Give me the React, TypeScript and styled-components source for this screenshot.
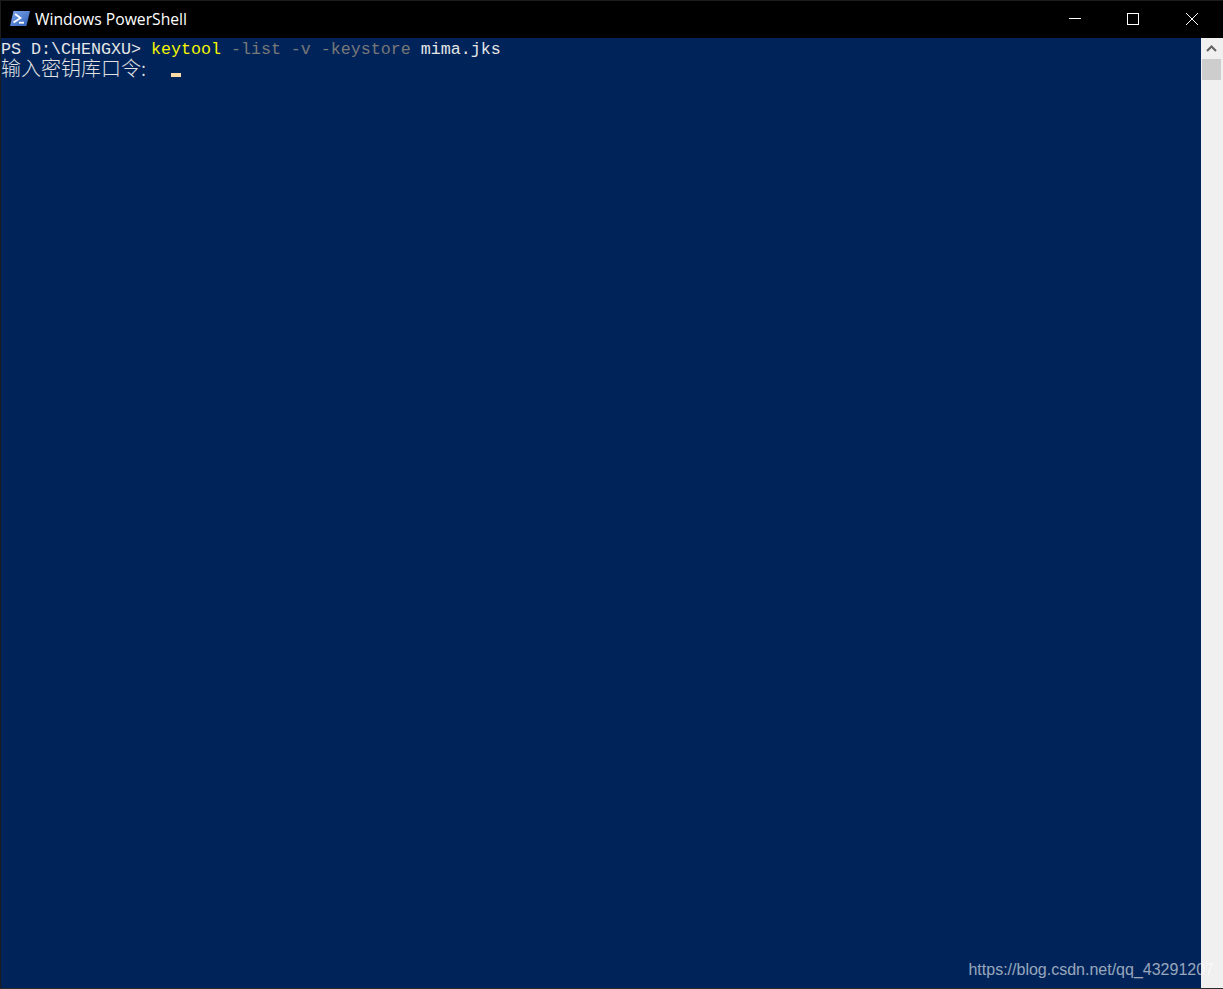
import React from "react";
import styled, { createGlobalStyle } from "styled-components";

const Global = createGlobalStyle`
  html, body { margin: 0; padding: 0; background: #00245a; }
  #root { width: 1223px; height: 989px; overflow: hidden; }
`;

const Window = styled.div`
  position: relative;
  box-sizing: border-box;
  width: 1223px;
  height: 989px;
  display: flex;
  flex-direction: column;
  border-left: 1px solid #1c1c1c;
  border-bottom: 1px solid #2a2a2a;
  background: #00245a;
`;

const TitleBar = styled.header`
  flex: 0 0 38px;
  display: flex;
  align-items: center;
  background: #000;
  border-top: 1px solid #1c1c1c;
  box-sizing: border-box;
  padding-left: 9px;
  padding-right: 1px;
`;

const AppIcon = styled.svg`
  width: 20px;
  height: 15px;
  margin-right: 5px;
  margin-top: -3px;
`;

const Title = styled.span`
  flex: 1;
  color: #fff;
  font: 15.7px "Open Sans", "Liberation Sans", sans-serif;
  margin-top: -1px;
`;

const WindowButton = styled.div<{ $wide?: boolean }>`
  width: ${(p) => (p.$wide ? "60px" : "58px")};
  height: 36px;
  align-self: flex-start;
  display: flex;
  align-items: center;
  justify-content: center;
`;

const Body = styled.main`
  flex: 1;
  display: flex;
  min-height: 0;
`;

const Console = styled.div`
  flex: 1;
  padding-top: 4px;
  font-family: "Liberation Mono", "Noto Sans CJK SC", monospace;
  font-size: 16.67px;
  color: #e6e6e6;
  white-space: pre;
`;

const CommandLine = styled.div`
  height: 16px;
  display: flex;
  align-items: flex-start;
`;

const PromptLine = styled.div`
  height: 20px;
  display: flex;
  align-items: flex-start;
`;

const Token = styled.span<{ $tone?: "yellow" | "gray" }>`
  line-height: 16px;
  color: ${(p) =>
    p.$tone === "yellow" ? "#f6f600" : p.$tone === "gray" ? "#787878" : "#e6e6e6"};
`;

const Cjk = styled.span`
  width: 150px;
  font-family: "Noto Sans CJK SC", sans-serif;
  font-size: 20px;
  line-height: 20px;
  font-weight: 300;
  color: #e2e2e2;
`;

const Cursor = styled.span`
  width: 10px;
  height: 4px;
  margin-left: 20px;
  margin-top: 15px;
  background: #fedba9;
`;

const ScrollBar = styled.aside`
  flex: 0 0 22px;
  box-sizing: border-box;
  padding-left: 1px;
  display: flex;
  flex-direction: column;
  background: #f0f0f0;
`;

const ScrollArrow = styled.div`
  width: 19px;
  height: 21px;
  display: flex;
  align-items: center;
  justify-content: center;
`;

const ScrollThumb = styled.div`
  width: 19px;
  height: 21px;
  background: #cdcdcd;
`;

const Watermark = styled.div`
  position: absolute;
  right: 9px;
  bottom: 9px;
  font: 16px "Liberation Sans", Arial, sans-serif;
  color: rgba(255, 255, 255, 0.6);
`;

export default function App() {
  return (
    <>
      <Global />
      <Window>
        <TitleBar>
          <AppIcon viewBox="0 0 20 15">
            <defs>
              <linearGradient id="psBlue" x1="0" y1="0" x2="1" y2="1">
                <stop offset="0" stopColor="#7ea6ea" />
                <stop offset="1" stopColor="#2f5fb8" />
              </linearGradient>
            </defs>
            <path d="M3.5 0H20L16.5 15H0Z" fill="url(#psBlue)" />
            <path d="M5 3L10.5 7L3.5 11.5" fill="none" stroke="#fff" strokeWidth="1.8" />
            <path d="M9 11.7H14" stroke="#fff" strokeWidth="1.8" />
          </AppIcon>
          <Title>Windows PowerShell</Title>
          <WindowButton>
            <svg width="12" height="12" viewBox="0 0 12 12">
              <path d="M0 5.5H12" stroke="#fff" strokeWidth="1" />
            </svg>
          </WindowButton>
          <WindowButton>
            <svg width="12" height="12" viewBox="0 0 12 12">
              <rect x="0.5" y="0.5" width="11" height="11" fill="none" stroke="#fff" strokeWidth="1" />
            </svg>
          </WindowButton>
          <WindowButton $wide>
            <svg width="12" height="12" viewBox="0 0 12 12">
              <path d="M0 0L12 12M12 0L0 12" stroke="#fff" strokeWidth="1" />
            </svg>
          </WindowButton>
        </TitleBar>
        <Body>
          <Console>
            <CommandLine>
              <Token>{"PS D:\\CHENGXU> "}</Token>
              <Token $tone="yellow">keytool</Token>
              <Token $tone="gray">{" -list -v -keystore "}</Token>
              <Token>mima.jks</Token>
            </CommandLine>
            <PromptLine>
              <Cjk>输入密钥库口令:</Cjk>
              <Cursor />
            </PromptLine>
          </Console>
          <ScrollBar>
            <ScrollArrow>
              <svg width="11" height="7" viewBox="0 0 11 7">
                <path d="M1 6L5.5 1.5L10 6" fill="none" stroke="#606060" strokeWidth="2" />
              </svg>
            </ScrollArrow>
            <ScrollThumb />
          </ScrollBar>
        </Body>
        <Watermark>https://blog.csdn.net/qq_43291207</Watermark>
      </Window>
    </>
  );
}
